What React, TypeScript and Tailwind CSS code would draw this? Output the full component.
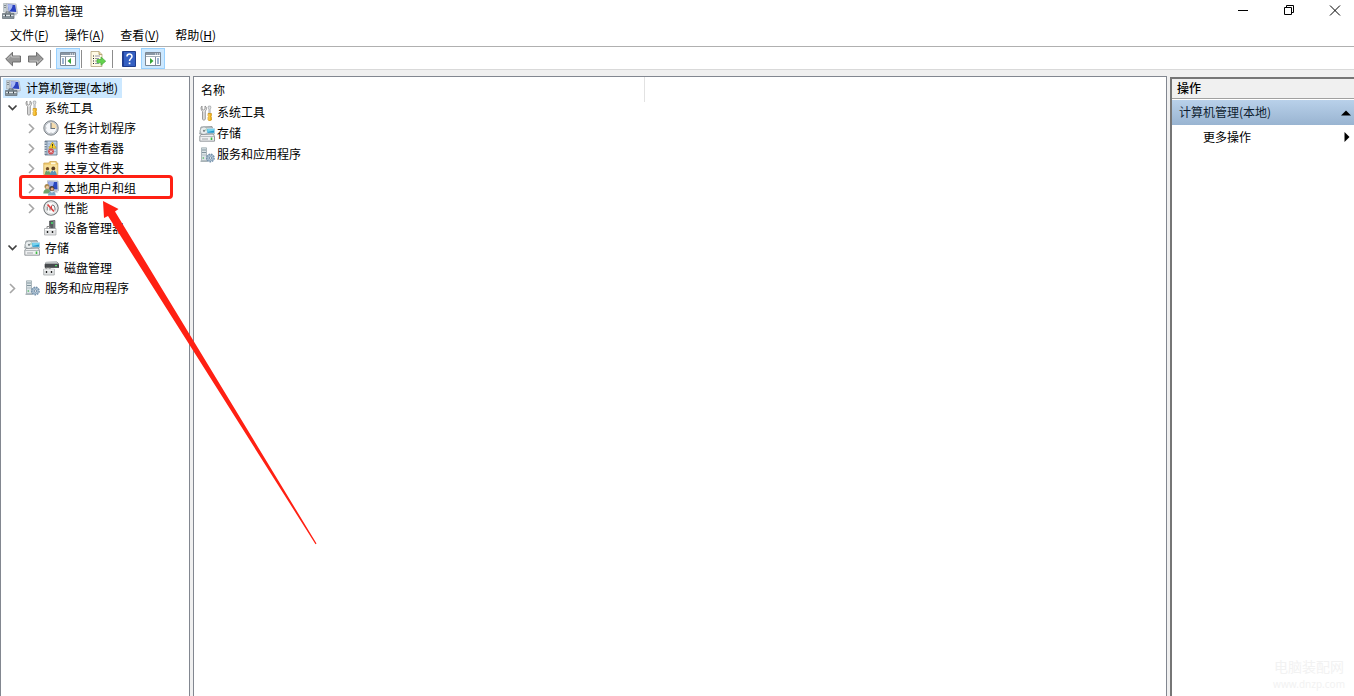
import React, { useState } from 'react';

type IconName =
  | 'computer'
  | 'tools'
  | 'clock'
  | 'event'
  | 'share'
  | 'users'
  | 'performance'
  | 'device'
  | 'storage'
  | 'disk'
  | 'services';

interface TreeNode {
  label: string;
  icon: IconName;
  level: number;
  state?: 'open' | 'closed';
}

const menus = [
  { label: '文件', hotkey: 'F' },
  { label: '操作', hotkey: 'A' },
  { label: '查看', hotkey: 'V' },
  { label: '帮助', hotkey: 'H' },
];

const treeNodes: TreeNode[] = [
  { label: '计算机管理(本地)', icon: 'computer', level: 0 },
  { label: '系统工具', icon: 'tools', level: 1, state: 'open' },
  { label: '任务计划程序', icon: 'clock', level: 2, state: 'closed' },
  { label: '事件查看器', icon: 'event', level: 2, state: 'closed' },
  { label: '共享文件夹', icon: 'share', level: 2, state: 'closed' },
  { label: '本地用户和组', icon: 'users', level: 2, state: 'closed' },
  { label: '性能', icon: 'performance', level: 2, state: 'closed' },
  { label: '设备管理器', icon: 'device', level: 2 },
  { label: '存储', icon: 'storage', level: 1, state: 'open' },
  { label: '磁盘管理', icon: 'disk', level: 2 },
  { label: '服务和应用程序', icon: 'services', level: 1, state: 'closed' },
];

const listItems: { label: string; icon: IconName }[] = [
  { label: '系统工具', icon: 'tools' },
  { label: '存储', icon: 'storage' },
  { label: '服务和应用程序', icon: 'services' },
];

const drawings: Record<IconName, React.ReactNode> = {
  computer: (
    <>
      <path d="M1.500.5h3V9h-3z" fill="#c9d2d6" stroke="#a5adb2" strokeWidth=".6" />
      <path d="M2 2.500h2M2 4.500h2" stroke="#70787e" strokeWidth=".8" />
      <path d="M4.500.5 14 1l1.500 9.500L6 9.500z" fill="#e4e7eb" stroke="#a3a9b0" strokeWidth=".7" />
      <path d="m5.700 1.600 7.500.3 1.100 7.200L6.900 8.500z" fill="#2a41c0" />
      <path d="m5.700 1.600 4.800.2Q11 5 7 8.500h-.1z" fill="#a9b9f2" />
      <path d="M10.500 10h3l1.800 2.300h-4.500z" fill="#c3c8ce" />
      <path d="M4 10.500V9h4v1.500" fill="none" stroke="#5b646b" />
      <path d="M.5 10.500h11.500v5H.5z" fill="#87939a" stroke="#616c73" strokeWidth=".7" />
      <path d="M1 12.500h10.500" stroke="#dfe5e8" />
      <path d="M3.500 11.500v2M8.500 11.500v2" stroke="#394147" />
    </>
  ),
  tools: (
    <>
      <path
        d="M3 1v3l1.500 1L6 4V1c1.700.8 2.200 3.500.3 5V14c0 1.500-2.800 1.500-2.800 0V6.300C1.700 5 1.500 2 3 1z"
        fill="#ececec"
        stroke="#858585"
        strokeWidth=".8"
      />
      <path d="M5 7v7" stroke="#bcbcbc" strokeWidth=".8" />
      <path d="M9.500 1h2l.5 2-.8 1v5h-1.300V4L9 3z" fill="#dfe2e4" stroke="#929699" strokeWidth=".6" />
      <path d="M9 8.500h3.500v2l-.5.8.5 1V15q-1.700 1.300-3.500 0v-2.700l.5-1-.5-.8z" fill="#f0b21c" stroke="#c48a0c" strokeWidth=".6" />
      <path d="M10 9v6" stroke="#ffe38a" strokeWidth=".8" />
    </>
  ),
  clock: (
    <>
      <circle cx="8" cy="8" r="7.200" fill="#c9ced3" stroke="#7c8288" strokeWidth="1" />
      <circle cx="8" cy="8" r="5.800" fill="#f6f8fb" stroke="#a6adb4" strokeWidth=".5" />
      <path d="M8 8.500V2.300A5.700 5.700 0 0 1 13.700 8.500z" fill="#f4dcae" />
      <path d="M8 3v5.500h4" fill="none" stroke="#6a727b" strokeWidth="1.100" />
      <path d="M8 12.500v1M2.500 8h1" stroke="#999" strokeWidth=".8" />
    </>
  ),
  event: (
    <>
      <path d="M2 1h12v14H2z" fill="#7f93a8" stroke="#5f7185" strokeWidth=".8" />
      <path d="M4.500 1.500h9v13h-9z" fill="#c3d5e8" />
      <path d="M5 4h8M5 6.500h8M5 9h8M5 11.500h8" stroke="#8da5c1" strokeWidth=".7" />
      <path d="M1 3h2.500M1 5.500h2.500M1 8h2.500M1 10.500h2.500M1 13h2.500" stroke="#e9eef2" />
      <path d="m9.500 2 3.700 6.200H5.800z" fill="#f9d32c" stroke="#c29b1b" strokeWidth=".6" />
      <path d="M9.500 4v2.200M9.500 6.700v.8" stroke="#222" strokeWidth=".9" />
      <circle cx="8" cy="11.500" r="2.900" fill="#cf5054" />
      <path d="m6.900 10.400 2.200 2.200m0-2.200-2.200 2.200" stroke="#fff" strokeWidth=".9" />
    </>
  ),
  share: (
    <>
      <path d="M.8 3h5l1-1.500h6.500V3h1.500v11.500H.8z" fill="#eecb72" stroke="#cda24b" strokeWidth=".7" />
      <path d="M8 2.500h4.500v1.800H8z" fill="#fff8de" />
      <path d="M1.300 4.800h13V14h-13z" fill="#f7df98" />
      <circle cx="4.500" cy="8.800" r="1.700" fill="#73502c" />
      <path d="M1.800 14.800q.2-4.300 2.700-4.300t3 4.300z" fill="#69a06b" />
      <circle cx="10.300" cy="8.500" r="1.900" fill="#593d26" />
      <path d="M6.800 15q.5-4.500 3.500-4.500t3.500 4.500z" fill="#5b93b5" />
      <path d="m4 10.500 1 1.500.7-1.500M9.600 10.500l1 1.500.7-1.500" fill="#fff" />
    </>
  ),
  users: (
    <>
      <path d="M4.500.7 15 1l.6 9.800L5 10z" fill="#dce0e6" stroke="#9aa1aa" strokeWidth=".6" />
      <path d="m5.500 1.800 8.700.3.400 7.300L6 9z" fill="#2a47bf" />
      <path d="m5.500 1.800 5.500.2Q11 5 8 9H6z" fill="#9badf0" />
      <path d="M11 11h3l1 1.500h-4z" fill="#bac0c8" />
      <circle cx="4" cy="6.500" r="2.500" fill="#a98850" />
      <circle cx="4.400" cy="7.200" r="1.500" fill="#edc79e" />
      <path d="M.3 13.500q.2-4.500 3.700-4.500t3.500 4.500z" fill="#6fa36f" />
      <circle cx="8.800" cy="8.600" r="2.500" fill="#4d3f33" />
      <circle cx="9.100" cy="9.100" r="1.500" fill="#dda97e" />
      <path d="M5 15.500q.3-4.200 3.800-4.200t4 4.200z" fill="#7ba6c4" />
      <path d="m7.900 11.300 1.100 2 .9-2z" fill="#fff" />
    </>
  ),
  performance: (
    <>
      <circle cx="8" cy="8" r="7.200" fill="#fbfbfb" stroke="#74797c" strokeWidth="1.100" />
      <circle cx="8" cy="8" r="5.700" fill="none" stroke="#d5d8d9" strokeWidth=".7" />
      <path d="M4.200 10.500V6.500M7 8v2.500M9 5l2 .5 1 2.500v2.500" fill="none" stroke="#6d7173" strokeWidth="1" />
      <path d="m4.500 4.500 6.500 7" stroke="#d94343" strokeWidth="1.800" />
      <path d="M8.500 5.500v3.500" stroke="#d94343" />
    </>
  ),
  device: (
    <>
      <path d="M6.500 1 12 .5V9H6.500z" fill="#55595c" stroke="#393b3d" strokeWidth=".5" />
      <path d="M10 .7 12 .5V9h-2z" fill="#777c7f" />
      <path d="M8 3h2" stroke="#44e36b" strokeWidth="1.400" />
      <path d="M4 8.500V6.500h3v2" fill="none" stroke="#888" />
      <path d="M1.500 8.500h11.500V15H1.500z" fill="#e3e4e5" stroke="#a1a4a6" strokeWidth=".7" />
      <path d="M2 9.500h10.500" stroke="#fff" />
      <path d="M4.500 11v2M9.500 11v2" stroke="#222" strokeWidth="1.400" />
    </>
  ),
  storage: (
    <>
      <path d="m2 1 11-.5L15.500 8H.7z" fill="#b5bcbf" stroke="#8b9396" strokeWidth=".8" />
      <circle cx="5" cy="4.800" r="3.900" fill="#e9edee" stroke="#9ca5a8" strokeWidth=".8" />
      <path d="m5 4.800 2.800-2.700A3.900 3.900 0 0 1 8.900 4.800z" fill="#a9cfb5" />
      <circle cx="5" cy="4.800" r="1.100" fill="#7b8487" />
      <path d="M8 2.500h7.700v4.700H8z" fill="#2198cb" stroke="#d8e8ef" strokeWidth=".7" />
      <path d="M8.500 3h6.700v1.500L8.500 6z" fill="#75d3ef" />
      <path d="m2 8.500 12-.5 1.500 2.200v5H.8v-5z" fill="#eff0f1" stroke="#7c8386" strokeWidth=".8" />
      <path d="M1 10.500h14" stroke="#b6bbbe" />
      <path d="M3 13h6" stroke="#a1a7aa" />
      <path d="M12.500 11.500v2.500" stroke="#3fbd43" strokeWidth="1.600" />
    </>
  ),
  disk: (
    <>
      <path d="m3 2.500 11-.5 2 2.500V7.500H2v-3z" fill="#484b4e" stroke="#2c2f31" strokeWidth=".6" />
      <path d="m3.200 1.700 10.500-.2 1.800 2.300H2z" fill="#bfc3c5" />
      <path d="M12 5.700h2" stroke="#52df68" strokeWidth="1.200" />
      <path d="M3 9.500V7.800h4v1.700" fill="none" stroke="#777" />
      <path d="M.7 9.200h10.600V15H.7z" fill="#e3e5e6" stroke="#999d9f" strokeWidth=".7" />
      <path d="M1 10h10" stroke="#fff" />
      <path d="M3.500 11v2M8.500 11v2" stroke="#222" strokeWidth="1.300" />
    </>
  ),
  services: (
    <>
      <path d="M2.500.8h5v13h-5z" fill="#dbe3e6" stroke="#9aa8ad" strokeWidth=".8" />
      <path d="M3 3h4M3 5.500h4" stroke="#758a93" strokeWidth=".9" />
      <path d="M3 8h4" stroke="#a7b5bb" strokeWidth=".8" />
      <path d="M1.500 13.500h7.200V15H1.500z" fill="#aab4b8" />
      <circle cx="4.300" cy="11" r=".8" fill="#42b653" />
      <circle cx="11.400" cy="11" r="3.700" fill="#dce7f0" stroke="#7491ab" strokeWidth="1.500" strokeDasharray="1.700 .8" />
      <circle cx="11.400" cy="11" r="2.900" fill="#b9cddd" stroke="#7f9ab1" strokeWidth=".7" />
      <circle cx="11.400" cy="11" r="1.200" fill="#fff" stroke="#4d6b86" strokeWidth=".7" />
    </>
  ),
};

const Icon: React.FC<{ name: IconName }> = ({ name }) => (
  <svg viewBox="0 0 16 16" className="h-4 w-4 shrink-0" aria-hidden="true">
    {drawings[name]}
  </svg>
);

const Chevron: React.FC<{ state?: 'open' | 'closed' }> = ({ state }) => (
  <svg viewBox="0 0 16 16" className="mr-1 h-4 w-4 shrink-0" fill="none" aria-hidden="true">
    {state === 'open' && <path d="m4.500 5.500 4 4 4-4" stroke="#404040" strokeWidth="1.700" />}
    {state === 'closed' && <path d="m6 4 4.500 4.500L6 13" stroke="#a6a6a6" strokeWidth="1.600" />}
  </svg>
);

const NavArrow: React.FC<{ flip?: boolean }> = ({ flip }) => (
  <svg viewBox="0 0 16 16" className={`h-4 w-4 ${flip ? 'rotate-180' : ''}`} aria-hidden="true">
    <path d="M.7 8 7.500 1.200V5h8v6h-8v3.800z" fill="#979797" stroke="#666" strokeWidth=".9" />
    <path d="M2.500 8 6.500 4V6h8" fill="none" stroke="#c4c4c4" />
  </svg>
);

const PaneToggle: React.FC<{ side: 'left' | 'right' }> = ({ side }) => (
  <svg viewBox="0 0 16 14" className="h-[14px] w-4" aria-hidden="true">
    <path d="M.5.5h15v13H.5z" fill="#fff" stroke="#7b8794" />
    <path d="M1 1h14v2H1z" fill="#8997a5" />
    <path d="M10 2h1M12 2h1M14 2h1" stroke="#fff" />
    <path d="M1 4.500h14" stroke="#a5afb9" />
    {side === 'left' ? (
      <>
        <path d="M5.500 5v8" stroke="#8290a0" />
        <path d="M2 7h2M2 9h2M2 11h2" stroke="#3b69a4" />
        <path d="M11 6v6L7.500 9z" fill="#35a536" />
      </>
    ) : (
      <>
        <path d="M10.500 5v8" stroke="#8290a0" />
        <path d="M12 7h2M12 9h2M12 11h2" stroke="#3b69a4" />
        <path d="M5 6v6L8.500 9z" fill="#35a536" />
      </>
    )}
  </svg>
);

const Divider = () => <span className="h-[18px] w-px shrink-0 bg-[#8c8c8c]" />;

const App: React.FC = () => {
  const [selected, setSelected] = useState(0);

  return (
    <div className="relative flex h-screen flex-col overflow-hidden bg-white font-['Noto_Sans_CJK_SC',sans-serif] text-xs leading-5 text-black">
      {/* Title bar */}
      <header className="flex h-6 shrink-0 items-center pb-[2px] pl-[2px]">
        <Icon name="computer" />
        <h1 className="ml-[5px] flex-1">计算机管理</h1>
        <div className="flex gap-2">
          <button aria-label="最小化" className="flex h-5 w-[38px] items-center justify-center">
            <svg viewBox="0 0 12 12" className="h-3 w-3" fill="none" stroke="#000">
              <path d="M1 5.500h10" />
            </svg>
          </button>
          <button aria-label="还原" className="flex h-5 w-[38px] items-center justify-center">
            <svg viewBox="0 0 12 12" className="h-3 w-3" fill="none" stroke="#000">
              <path d="M1.500 2.500h7v7h-7zM3.500 2V.5h7v7H9" />
            </svg>
          </button>
          <button aria-label="关闭" className="flex h-5 w-[38px] items-center justify-center">
            <svg viewBox="0 0 12 12" className="h-3 w-3" fill="none" stroke="#000">
              <path d="m1 .5 10 10M11 .5l-10 10" />
            </svg>
          </button>
        </div>
      </header>

      {/* Menu */}
      <nav className="flex h-[23px] shrink-0 items-center gap-4 border-b border-[#b0b0b0] pb-px pl-[10px]">
        {menus.map((menu) => (
          <button key={menu.hotkey}>
            {menu.label}(<span className="underline">{menu.hotkey}</span>)
          </button>
        ))}
      </nav>

      {/* Toolbar */}
      <div className="flex h-[23px] shrink-0 items-center border-b border-[#d9d9d9] pl-[5px] pt-px">
        <button aria-label="后退" className="mr-[7px]">
          <NavArrow />
        </button>
        <button aria-label="前进" className="mr-[6px]">
          <NavArrow flip />
        </button>
        <Divider />
        <button
          aria-label="控制台树"
          className="ml-[5px] mr-px flex h-[21px] w-6 items-center justify-center border border-[#99d1ff] bg-[#cce8ff]"
        >
          <PaneToggle side="left" />
        </button>
        <Divider />
        <button aria-label="导出列表" className="ml-2 mr-[6px]">
          <svg viewBox="0 0 16 16" className="h-4 w-4" aria-hidden="true">
            <path d="M1 .5h8L12 3.500v12H1z" fill="#fffbe5" stroke="#b5a47c" strokeWidth=".8" />
            <path d="M9 .5v3h3" fill="#e5d6a8" stroke="#a58d58" strokeWidth=".7" />
            <path d="M3 5h1M3 7.500h1M3 10h1M3 12.500h1" stroke="#222" />
            <path d="M5 5h5M5 7.500h4M5 10h2M5 12.500h4" stroke="#8d8da8" strokeWidth=".9" />
            <path d="M7 8.500h4V6l4.700 4.200L11 14.300v-2.500H7z" fill="#64d34e" stroke="#45a83a" strokeWidth=".7" />
          </svg>
        </button>
        <Divider />
        <button aria-label="帮助" className="ml-[9px] mr-[5px]">
          <svg viewBox="0 0 14 16" className="h-4 w-[14px]" aria-hidden="true">
            <path d="M.5.5h13v15H.5z" fill="#3560c2" stroke="#1f3c8c" />
            <path d="M1.500 1v14" stroke="#203f99" />
            <path d="M5 5.500C5 2.300 10 2.300 10 5.300 10 7.500 7.500 7.500 7.500 10" fill="none" stroke="#fff" strokeWidth="1.500" />
            <path d="M6.700 11.500h1.700v1.700H6.700z" fill="#fff" />
          </svg>
        </button>
        <button
          aria-label="操作窗格"
          className="flex h-[21px] w-6 items-center justify-center border border-[#99d1ff] bg-[#cce8ff]"
        >
          <PaneToggle side="right" />
        </button>
      </div>

      {/* Panes */}
      <main className="flex min-h-0 flex-1 gap-[3px] bg-[#f0f0f0] pt-[6px]">
        <aside className="w-[190px] shrink-0 border border-b-0 border-[#828790] bg-white pl-[2px] pt-px">
          <ul>
            {treeNodes.map((node, index) => (
              <li key={node.label} className="flex h-5">
                <button
                  onClick={() => setSelected(index)}
                  className={`flex h-5 items-center whitespace-nowrap pr-1 ${
                    node.level === 0 ? 'pl-[2px]' : node.level === 1 ? 'pl-px' : 'pl-5'
                  } ${selected === index ? 'bg-[#cce8ff]' : ''}`}
                >
                  {node.level > 0 && <Chevron state={node.state} />}
                  <Icon name={node.icon} />
                  <span className="ml-[5px] pb-px">{node.label}</span>
                </button>
              </li>
            ))}
          </ul>
        </aside>

        <section className="min-w-0 flex-1 border border-b-0 border-[#828790] bg-white">
          <table className="border-collapse">
            <thead>
              <tr>
                <th className="h-[25px] w-[450px] border-r border-[#e2e2e2] p-0 pl-[7px] text-left font-normal">名称</th>
              </tr>
            </thead>
            <tbody>
              {listItems.map((item) => (
                <tr key={item.label}>
                  <td className="h-[21px] p-0 pl-[5px]">
                    <div className="flex items-center gap-[2px]">
                      <Icon name={item.icon} />
                      <span className="pb-px">{item.label}</span>
                    </div>
                  </td>
                </tr>
              ))}
            </tbody>
          </table>
        </section>

        <aside className="mt-px flex w-[184px] shrink-0 flex-col border-l-2 border-t-2 border-[#767676] bg-white">
          <h2 className="h-5 border-b border-[#a0a0a0] bg-[#f0f0f0] pl-[5px] font-medium leading-[18px]">操作</h2>
          <button className="mt-px flex h-[25px] items-center justify-between bg-linear-to-b from-[#b9d1ea] to-[#99b4d1] pl-[7px] pr-[3px] text-[#0f1d30]">
            <span className="pb-px">计算机管理(本地)</span>
            <svg viewBox="0 0 10 6" className="h-[6px] w-[10px]" aria-hidden="true">
              <path d="m0 5.500 5-5 5 5z" fill="#000" />
            </svg>
          </button>
          <button className="flex h-6 items-center justify-between pl-[31px] pr-1">
            <span className="pb-px">更多操作</span>
            <svg viewBox="0 0 6 10" className="h-[10px] w-[6px]" aria-hidden="true">
              <path d="m.5 0 5 5-5 5z" fill="#000" />
            </svg>
          </button>
        </aside>
      </main>

      {/* Callout over the tree */}
      <div className="pointer-events-none absolute left-[19px] top-[175px] h-6 w-[154px] rounded-[4px] border-[3px] border-[#ff2013]" />
      <svg
        viewBox="0 0 220 350"
        className="pointer-events-none absolute left-[100px] top-[198px] h-[350px] w-[220px]"
        aria-hidden="true"
      >
        <path d="m3 3 15.500 8-3.500 2.500L216.500 345.500l-1 .7L8 18l-4 2z" fill="#ff2013" />
      </svg>

      {/* Watermark */}
      <div className="pointer-events-none absolute bottom-[6px] right-[9px] flex flex-col gap-1 text-center text-[#f2f2f2]">
        <p className="text-sm leading-4">电脑装配网</p>
        <p className="font-['Noto_Sans',sans-serif] text-[10px] leading-3">www.dnzp.com</p>
      </div>
    </div>
  );
};

export default App;
